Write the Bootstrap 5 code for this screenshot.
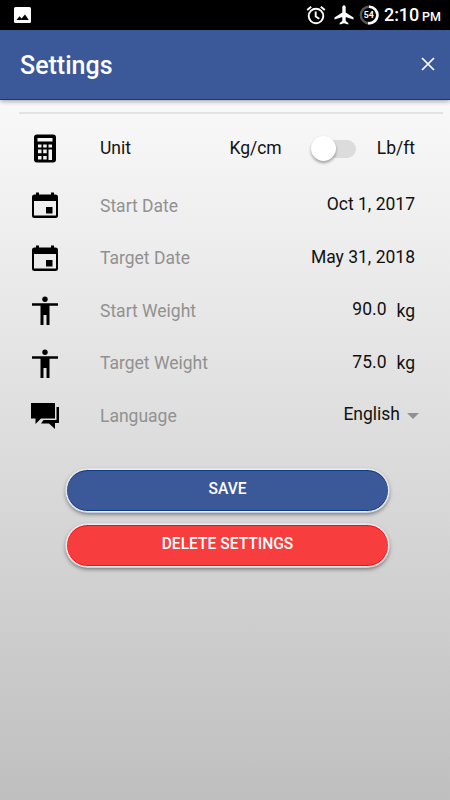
<!DOCTYPE html>
<html lang="en">
<head>
<meta charset="utf-8">
<meta name="viewport" content="width=device-width, initial-scale=1">
<title>Settings</title>
<link href="https://cdn.jsdelivr.net/npm/bootstrap@5.3.0/dist/css/bootstrap.min.css" rel="stylesheet">
<style>
body{font-family:Roboto,"Liberation Sans",sans-serif;font-size:17.5px;line-height:24px;color:#111;height:800px;overflow:hidden;background:#c1c1c1}
svg{display:block;flex:none}
.status{height:30px;background:#000;padding:0 10px 0 14px}
.clock{width:57px;font-size:18px;font-weight:500;line-height:30px;margin-left:5px;margin-right:-1px;padding-top:2px;white-space:nowrap;letter-spacing:-.1px}
.clock small{font-size:12.5px;font-weight:500;margin-left:3px}
.appbar{height:70px;background:#3b5998;border-bottom:1px solid #0b3a86;padding:0 15px 0 20px;box-shadow:0 1px 5px rgba(0,0,0,.4);z-index:1}
.appbar h1{font-size:25px;font-weight:500;line-height:70px;padding-top:2px}
.content{height:700px;padding-top:12px;background:linear-gradient(#f9f9f9,#bfbfbf)}
.rule{height:2px;background:#e2e2e2;margin:0 7px 0 19px}
.setting{height:52.5px;padding:0 35px 0 30px}
.setting.unit{height:66px;padding-top:3px}
.ico{width:30px;height:30px;margin-right:40px}
.name{color:#919191;margin-top:-1.5px}
.unit .name{color:#111}
.unit .name,.unit .val{margin-top:-2px}
.val{margin-top:-4px}
.unit-kg{color:#111;padding-left:10px;margin-top:-1px}
.track{width:41px;height:18px;border-radius:9px;background:#dcdcdc;margin:0 21px 0 33px}
.knob{width:25px;height:25px;border-radius:50%;background:#fff;box-shadow:0 2px 3px rgba(0,0,0,.35);margin-left:-4px}
.caret{width:0;height:0;border:6px solid transparent;border-top-color:#919191;border-bottom:0;margin:0 -4px 0 7px}
.pill{width:323px;height:43px;border-radius:22px;border:1px solid #eee;color:#fff!important;font-size:15.6px;font-weight:500;line-height:20px;padding:0 0 3px;margin-left:5px}
.save{background:#3b5998!important;border-color:#eee!important;box-shadow:0 0 0 .7px #e8e8e8,0 2px 4px rgba(0,0,0,.5),inset 0 1px #0b3a86,inset 0 -1px #0b3a86}
.delete{background:#f73d3d!important;border-color:#eee!important;box-shadow:0 0 0 .7px #e8e8e8,0 2px 4px rgba(0,0,0,.5),inset 0 1px #f50d0d,inset 0 -1px #f50d0d}
.actions{margin-top:26px;gap:12px}
</style>
</head>
<body>
<svg width="0" height="0" class="position-absolute">
<symbol id="cal" viewBox="0 0 30 30"><path fill-rule="evenodd" d="M6 1.500h3V3.500h12V1.500h3V3.500h1.500Q28 3.500 28 6v18.500Q28 27 25.500 27h-21Q2 27 2 24.500V6Q2 3.500 4.500 3.500H6zM4 10v14.500h22V10zM16 16h6.500v6.500H16z"/></symbol>
<symbol id="person" viewBox="0 0 30 30"><circle cx="15" cy="3.200" r="2.700"/><path d="M2 7.300h26v2.500h-8.500V29h-3V19h-3v10h-3V9.800H2z"/></symbol>
</svg>
<div class="status d-flex align-items-center text-white">
<svg width="17" height="16" viewBox="0 0 17 16"><rect width="17" height="16" rx="1.500" fill="#fff"/><path d="M2.500 13l3-3.700 2 2.200L11 7.500l3.800 5.500z"/></svg>
<svg class="ms-auto" width="20" height="20" viewBox="0 0 20 20" fill="none" stroke="#fff" stroke-width="1.900"><circle cx="10" cy="11" r="7.300"/><path d="M1.200 5l4-3.300M18.800 5l-4-3.300M9.700 6.500v5l3.600 2.300"/></svg>
<svg width="20" height="20" viewBox="0 0 20 20" class="ms-2" fill="#fff"><path d="M8.300 2Q8.500.3 10 .3T11.700 2v5.500l7.800 5v2L11.700 12v4l2.600 2v1.500L10 18.300l-4.300 1.200V18l2.600-2v-4L.5 14.500v-2l7.800-5z"/></svg>
<svg width="20" height="20" viewBox="0 0 20 20" style="margin-left:5px"><circle cx="10" cy="10" r="8.200" fill="none" stroke="#555" stroke-width="2.400"/><path d="M10 1.800a8.200 8.200 0 1 1-1 16.300" fill="none" stroke="#fff" stroke-width="2.600"/><text x="9.800" y="13.100" text-anchor="middle" font-size="8.800" font-weight="700" fill="#fff">54</text></svg>
<span class="clock">2:10<small>PM</small></span>
</div>
<header class="appbar d-flex align-items-center justify-content-between text-white position-relative">
<h1 class="m-0">Settings</h1>
<svg width="14" height="14" viewBox="0 0 14 14" stroke="#fff" stroke-width="1.700" style="margin-top:-2px"><path d="M1 1l12 12M13 1l-12 12"/></svg>
</header>
<main class="content">
<div class="rule"></div>
<div class="setting unit d-flex align-items-center">
<svg class="ico" viewBox="0 0 30 30"><path fill-rule="evenodd" d="M7 .500h16q3 0 3 3v22q0 3-3 3H7q-3 0-3-3v-22q0-3 3-3zM7.500 4v3.500h15V4zM8 10.500v3h3.500v-3zM13.200 10.500v3h3.500v-3zM18.500 10.500v3H22v-3zM8 15.500v3.700h3.500v-3.700zM13.200 15.500v3.700h3.500v-3.700zM18.500 15.500V26H22V15.500zM8 22v3.500h3.500V22zM13.200 22v3.500h3.500V22z"/></svg>
<span class="name">Unit</span><span class="val ms-auto">Kg/cm</span>
<div class="track d-flex align-items-center"><div class="knob"></div></div><span class="val">Lb/ft</span>
</div>
<div class="setting d-flex align-items-center"><svg class="ico"><use href="#cal"/></svg><span class="name">Start Date</span><span class="val ms-auto">Oct 1, 2017</span></div>
<div class="setting d-flex align-items-center"><svg class="ico"><use href="#cal"/></svg><span class="name">Target Date</span><span class="val ms-auto">May 31, 2018</span></div>
<div class="setting d-flex align-items-center"><svg class="ico"><use href="#person"/></svg><span class="name">Start Weight</span><span class="val ms-auto">90.0</span><span class="unit-kg">kg</span></div>
<div class="setting d-flex align-items-center"><svg class="ico"><use href="#person"/></svg><span class="name">Target Weight</span><span class="val ms-auto">75.0</span><span class="unit-kg">kg</span></div>
<div class="setting d-flex align-items-center"><svg class="ico" viewBox="0 0 30 30"><path d="M1 2h24v15.500H11L5.500 23v-5.500H1zM26.500 6H29v16h-4v6l-6-5.500h-8L13.500 19h13z"/></svg><span class="name">Language</span><span class="val ms-auto">English</span><span class="caret"></span></div>
<div class="actions d-flex flex-column align-items-center">
<button class="btn pill save">SAVE</button>
<button class="btn pill delete">DELETE SETTINGS</button>
</div>
</main>
<script src="https://cdn.jsdelivr.net/npm/bootstrap@5.3.0/dist/js/bootstrap.bundle.min.js"></script>
</body>
</html>
